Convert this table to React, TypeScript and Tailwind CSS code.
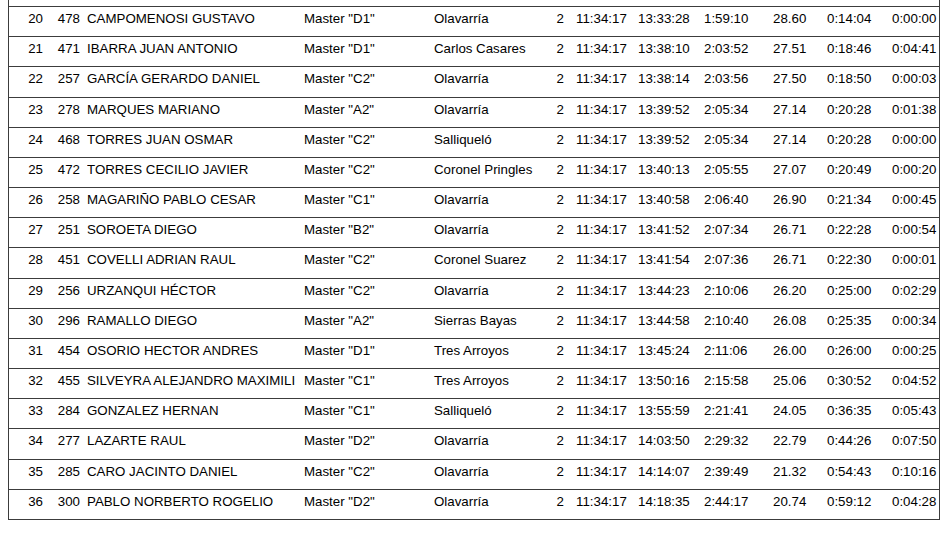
const rows = [
  ["20", "478", "CAMPOMENOSI GUSTAVO", 'Master "D1"', "Olavarría", "2", "11:34:17", "13:33:28", "1:59:10", "28.60", "0:14:04", "0:00:00"],
  ["21", "471", "IBARRA JUAN ANTONIO", 'Master "D1"', "Carlos Casares", "2", "11:34:17", "13:38:10", "2:03:52", "27.51", "0:18:46", "0:04:41"],
  ["22", "257", "GARCÍA GERARDO DANIEL", 'Master "C2"', "Olavarría", "2", "11:34:17", "13:38:14", "2:03:56", "27.50", "0:18:50", "0:00:03"],
  ["23", "278", "MARQUES MARIANO", 'Master "A2"', "Olavarría", "2", "11:34:17", "13:39:52", "2:05:34", "27.14", "0:20:28", "0:01:38"],
  ["24", "468", "TORRES JUAN OSMAR", 'Master "C2"', "Salliqueló", "2", "11:34:17", "13:39:52", "2:05:34", "27.14", "0:20:28", "0:00:00"],
  ["25", "472", "TORRES CECILIO JAVIER", 'Master "C2"', "Coronel Pringles", "2", "11:34:17", "13:40:13", "2:05:55", "27.07", "0:20:49", "0:00:20"],
  ["26", "258", "MAGARIÑO PABLO CESAR", 'Master "C1"', "Olavarría", "2", "11:34:17", "13:40:58", "2:06:40", "26.90", "0:21:34", "0:00:45"],
  ["27", "251", "SOROETA DIEGO", 'Master "B2"', "Olavarría", "2", "11:34:17", "13:41:52", "2:07:34", "26.71", "0:22:28", "0:00:54"],
  ["28", "451", "COVELLI ADRIAN RAUL", 'Master "C2"', "Coronel Suarez", "2", "11:34:17", "13:41:54", "2:07:36", "26.71", "0:22:30", "0:00:01"],
  ["29", "256", "URZANQUI HÉCTOR", 'Master "C2"', "Olavarría", "2", "11:34:17", "13:44:23", "2:10:06", "26.20", "0:25:00", "0:02:29"],
  ["30", "296", "RAMALLO DIEGO", 'Master "A2"', "Sierras Bayas", "2", "11:34:17", "13:44:58", "2:10:40", "26.08", "0:25:35", "0:00:34"],
  ["31", "454", "OSORIO HECTOR ANDRES", 'Master "D1"', "Tres Arroyos", "2", "11:34:17", "13:45:24", "2:11:06", "26.00", "0:26:00", "0:00:25"],
  ["32", "455", "SILVEYRA ALEJANDRO MAXIMILI", 'Master "C1"', "Tres Arroyos", "2", "11:34:17", "13:50:16", "2:15:58", "25.06", "0:30:52", "0:04:52"],
  ["33", "284", "GONZALEZ HERNAN", 'Master "C1"', "Salliqueló", "2", "11:34:17", "13:55:59", "2:21:41", "24.05", "0:36:35", "0:05:43"],
  ["34", "277", "LAZARTE RAUL", 'Master "D2"', "Olavarría", "2", "11:34:17", "14:03:50", "2:29:32", "22.79", "0:44:26", "0:07:50"],
  ["35", "285", "CARO JACINTO DANIEL", 'Master "C2"', "Olavarría", "2", "11:34:17", "14:14:07", "2:39:49", "21.32", "0:54:43", "0:10:16"],
  ["36", "300", "PABLO NORBERTO ROGELIO", 'Master "D2"', "Olavarría", "2", "11:34:17", "14:18:35", "2:44:17", "20.74", "0:59:12", "0:04:28"],
];

export default function App() {
  return (
    <div className="w-[952px] h-[535px] bg-white overflow-hidden font-['Liberation_Sans',Arial,sans-serif] text-[13.3px] text-black">
      <div className="ml-[8px] w-[932px] border-x border-[#3c3c3c]">
        <div className="h-[6px]" />
        {rows.map((r, i) => (
          <div
            key={r[0]}
            className={`grid grid-cols-[34px_37px_224px_130px_106px_36px_62px_66px_69px_54px_65px_47px] pt-[4px] leading-[15px] border-t border-[#3c3c3c] ${i === rows.length - 1 ? "border-b h-[31.18px]" : "h-[30.18px]"}`}
          >
            <div className="text-right">{r[0]}</div>
            <div className="text-right">{r[1]}</div>
            <div className="pl-[7px]">
              <div className="w-[211px] overflow-hidden whitespace-nowrap">{r[2]}</div>
            </div>
            <div className="whitespace-nowrap">{r[3]}</div>
            <div className="whitespace-nowrap">{r[4]}</div>
            <div className="text-right pr-[12px]">{r[5]}</div>
            <div>{r[6]}</div>
            <div>{r[7]}</div>
            <div>{r[8]}</div>
            <div>{r[9]}</div>
            <div>{r[10]}</div>
            <div>{r[11]}</div>
          </div>
        ))}
      </div>
    </div>
  );
}
